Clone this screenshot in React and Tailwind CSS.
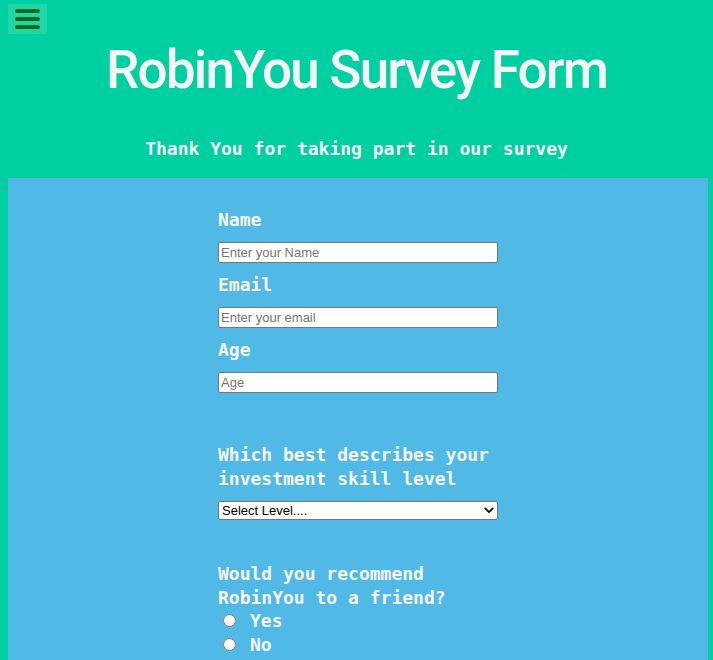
import React from "react";

function Field({ label, placeholder, type = "text" }) {
  return (
    <div className="flex flex-col">
      <label className="h-6 leading-6 text-[18px] font-bold">{label}</label>
      <input
        type={type}
        placeholder={placeholder}
        className="mt-[10px] mb-[10px] h-[21px] w-[280px] rounded-[2px] border border-[#767676] bg-white px-[2px] font-['Liberation_Sans',Arial,sans-serif] text-[13px] text-black placeholder:text-[#757575] outline-none"
      />
    </div>
  );
}

export default function App() {
  return (
    <div className="min-h-screen bg-[#00cfa1] pt-1 pb-10 font-['DejaVu_Sans_Mono',monospace] text-[#f5f5f5]">
      <button className="ml-2 flex h-[30px] w-[39px] flex-col items-center justify-center gap-[4px] bg-[#1fd6a7]">
        <span className="block h-[4px] w-[25px] rounded-full bg-[#006a1c]" />
        <span className="block h-[4px] w-[25px] rounded-full bg-[#006a1c]" />
        <span className="block h-[4px] w-[25px] rounded-full bg-[#006a1c]" />
      </button>

      <h1 className="mt-[4px] text-center font-['Roboto',sans-serif] text-[53px] leading-[65px] font-medium tracking-[-1.8px]">
        RobinYou Survey Form
      </h1>
      <p className="mt-[34px] text-center text-[18px] leading-6 font-bold">
        Thank You for taking part in our survey
      </p>

      <div className="ml-2 mt-[17px] w-[700px] bg-[#51b9e6] pt-[30px] pb-20">
        <form className="mx-auto w-[280px]">
          <Field label="Name" placeholder="Enter your Name" />
          <Field label="Email" placeholder="Enter your email" type="email" />
          <Field label="Age" placeholder="Age" type="number" />

          <p className="mt-10 text-[18px] leading-6 font-bold">
            Which best describes your investment skill level
          </p>
          <div className="relative mt-[10px] h-[19px] w-[280px]">
            <select className="block h-[19px] w-full appearance-none rounded-[2px] border border-[#767676] bg-white pl-[3px] font-['Liberation_Sans',Arial,sans-serif] text-[13px] leading-[17px] text-black outline-none">
              <option>Select Level....</option>
              <option>Beginner</option>
              <option>Intermediate</option>
              <option>Expert</option>
            </select>
            <svg
              viewBox="0 0 12 8"
              className="pointer-events-none absolute right-[4px] top-[6px] h-[7px] w-[10px]"
              fill="none"
              stroke="black"
              strokeWidth={2}
              strokeLinecap="round"
              strokeLinejoin="round"
            >
              <path d="M1.5 1.5 6 6l4.5-4.5" />
            </svg>
          </div>

          <p className="mt-[42px] text-[18px] leading-6 font-bold">
            Would you recommend RobinYou to a friend?
          </p>
          <label className="-mt-[2px] flex h-6 items-center text-[18px] font-bold">
            <input type="radio" name="rec" className="ml-[5px] mr-[14px] h-[13px] w-[13px]" />
            Yes
          </label>
          <label className="flex h-6 items-center text-[18px] font-bold">
            <input type="radio" name="rec" className="ml-[5px] mr-[14px] h-[13px] w-[13px]" />
            No
          </label>
        </form>
      </div>
    </div>
  );
}
